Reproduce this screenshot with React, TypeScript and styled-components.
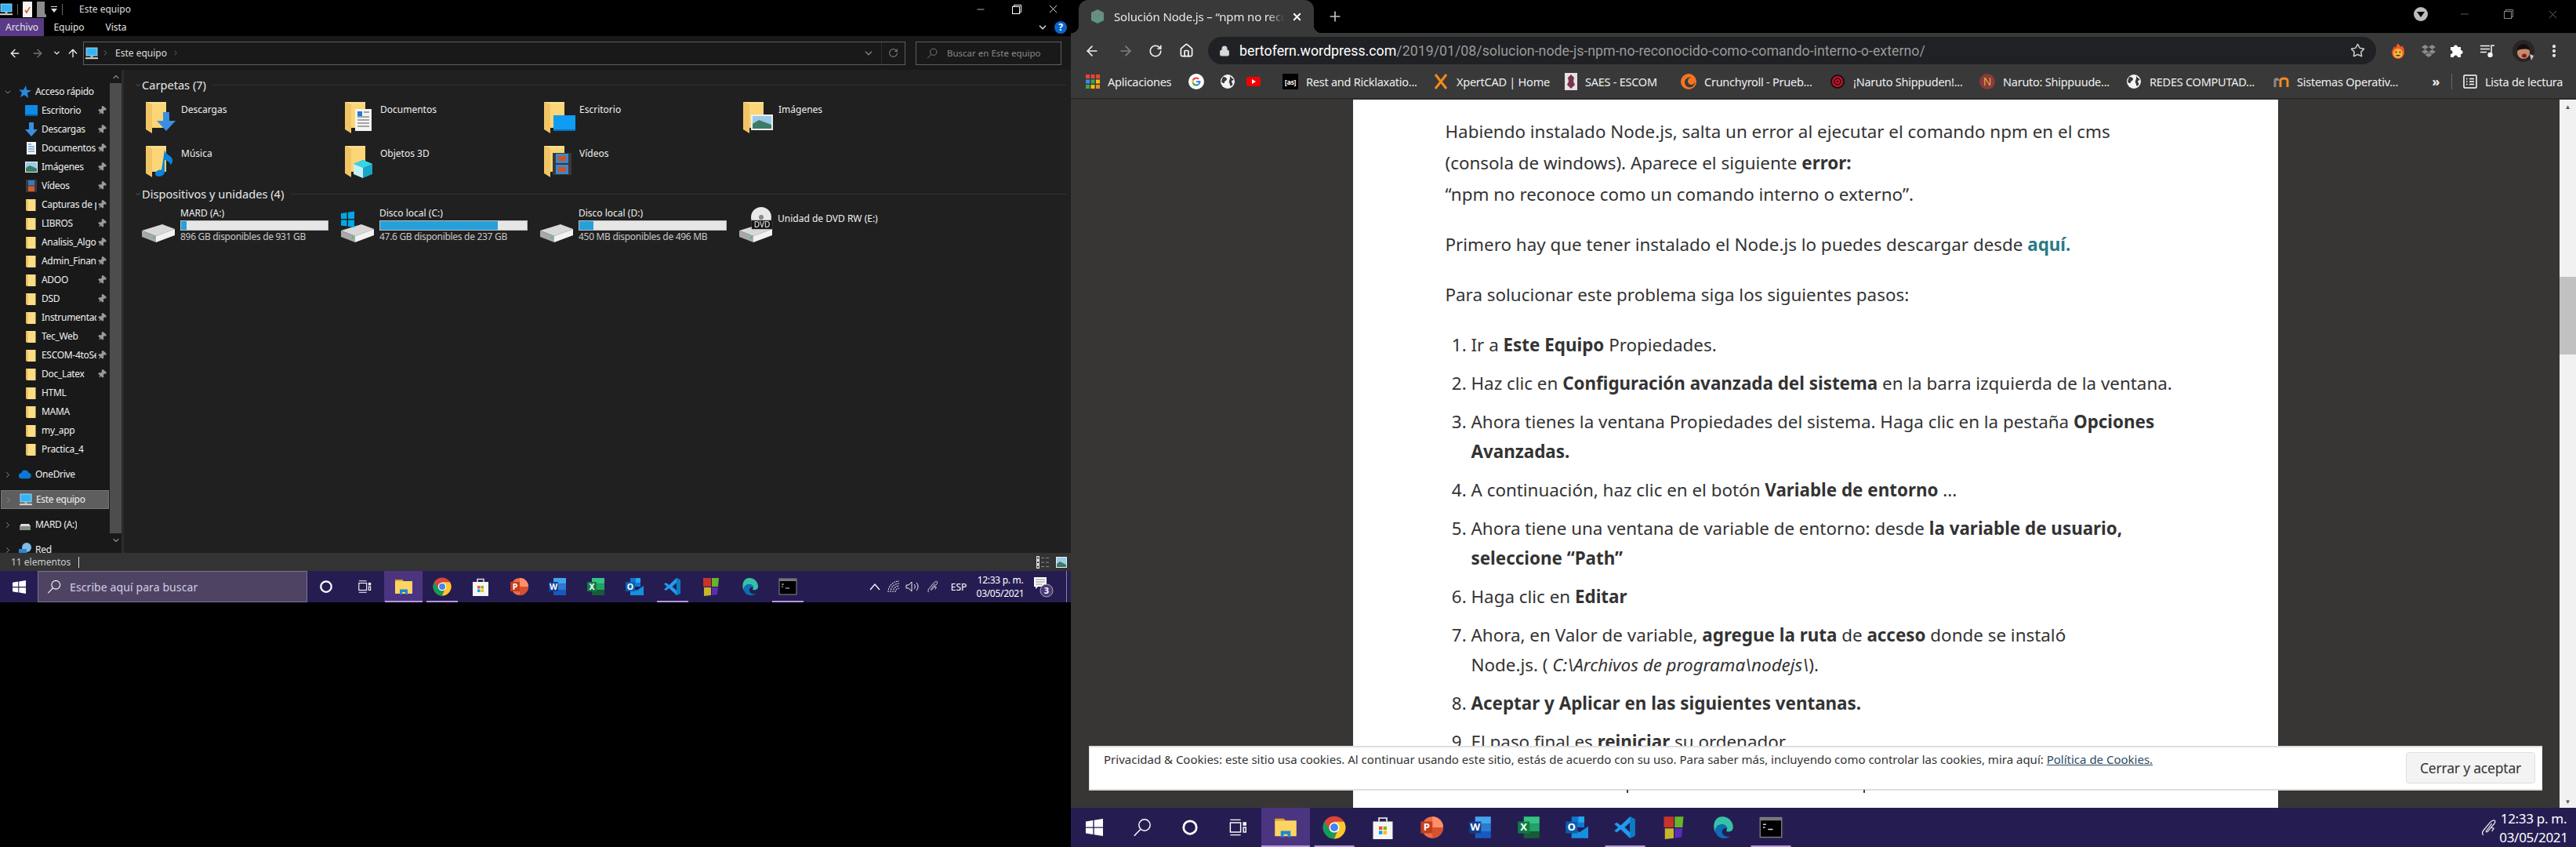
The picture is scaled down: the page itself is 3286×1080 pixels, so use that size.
import React from 'react';
import styled, { createGlobalStyle } from 'styled-components';
import { Pin, ArrowLeft, ArrowRight, ArrowUp, ChevronDown, ChevronRight, ChevronUp, RotateCw, Star, Home, Lock, Plus, X, Minus, MoreVertical } from 'lucide-react';

const Global = createGlobalStyle`
  html, body { margin: 0; padding: 0; background: #000; }
  * { box-sizing: border-box; }
`;

const Screen = styled.div`
  width: 3286px; height: 1080px; display: flex; background: #000; overflow: hidden;
  font-family: "Noto Sans", "Open Sans", sans-serif;
`;
const LeftPane = styled.div`
  width: 1366px; height: 768px; flex: none; display: flex; flex-direction: column; color: #fff; font-size: 12px;
`;
const RightPane = styled.div`
  width: 1920px; height: 1080px; flex: none; display: flex; flex-direction: column;
`;

/* ---------- explorer ---------- */
const TitleBar = styled.div`height: 23px; display: flex; align-items: center; background: #000;`;
const QuickIcons = styled.div`display: flex; align-items: center; width: 101px; gap: 6px;`;
const VSep = styled.span`width: 1px; height: 14px; background: #666; flex: none;`;
const TitleText = styled.span`flex: 1; font-size: 12px; color: #ddd; line-height: 1;`;
const WinBtn = styled.span<{ $w: number }>`width: ${p => p.$w}px; display: flex; justify-content: center; align-items: center; color: #fff; flex: none;`;
const RibbonTabs = styled.div`height: 23px; display: flex; align-items: stretch; background: #000;`;
const RibbonTab = styled.span<{ $active?: boolean; $w: number }>`
  width: ${p => p.$w}px; display: flex; align-items: center; justify-content: center; color: #e4e4e4;
  background: ${p => (p.$active ? '#5a3a87' : 'transparent')};
`;
const RibbonEnd = styled.div`margin-left: auto; display: flex; align-items: center; gap: 8px; padding-right: 5px;`;
const HelpDot = styled.span`
  width: 16px; height: 16px; border-radius: 50%; background: #0a66c8; color: #fff; font-weight: 700; font-size: 12px;
  display: flex; align-items: center; justify-content: center;
`;
const NavBar = styled.div`height: 43px; background: #191919; display: flex; align-items: center; padding-left: 7px;`;
const NavSlot = styled.span<{ $w: number; $dim?: boolean }>`
  width: ${p => p.$w}px; flex: none; display: flex; justify-content: center; align-items: center;
  color: ${p => (p.$dim ? '#777' : '#f0f0f0')};
`;
const AddressBox = styled.div`
  width: 1049px; height: 30px; border: 1px solid #5e5e5e; display: flex; align-items: center; padding-left: 2px; flex: none; margin-left: -1px;
`;
const AddressText = styled.span`font-size: 12px; color: #ddd; margin: 0 6px 0 4px;`;
const AddressEnd = styled.div`margin-left: auto; display: flex; align-items: center; height: 100%;`;
const AddressSep = styled.span`width: 1px; height: 100%; background: #2e2e2e;`;
const SearchBox = styled.div`
  width: 186px; height: 30px; margin-left: 13px; border: 1px solid #5e5e5e; display: flex; align-items: center; padding-left: 13px; gap: 12px; color: #888; font-size: 11.5px;
`;
const Body = styled.div`height: 616px; display: flex; background: #191919; overflow: hidden;`;
const Tree = styled.div`width: 140px; padding-top: 16px; flex: none; overflow: hidden;`;
const TreeRow = styled.div<{ $gap?: number; $selected?: boolean }>`
  height: 24px; display: flex; align-items: center; padding-left: 4px; margin-right: 1px; margin-left: ${p => (p.$selected ? 1 : 0)}px;
  margin-top: ${p => p.$gap ?? 0}px; color: #f0f0f0; white-space: nowrap;
  background: ${p => (p.$selected ? '#5e5e5e' : 'transparent')};
  outline: ${p => (p.$selected ? '1px solid #777' : 'none')}; outline-offset: -1px;
`;
const Twisty = styled.span`width: 12px; flex: none; display: flex; justify-content: center; color: #8a8a8a;`;
const TreeIcon = styled.span<{ $level: number }>`
  flex: none; width: 16px; height: 16px; display: flex; align-items: center; justify-content: center;
  margin-left: ${p => (p.$level === 1 ? 8 : 28)}px; margin-right: 5px;
`;
const TreeName = styled.span<{ $clip?: boolean }>`
  overflow: hidden; display: block; width: ${p => (p.$clip ? '70px' : 'auto')}; flex: none; font-size: 12px; line-height: 1.2; letter-spacing: -0.3px;
`;
const PinBox = styled.span`
  flex: none; width: 14px; display: flex; justify-content: center; color: #9a9a9a;
  svg { transform: rotate(40deg); }
`;
const Scroll = styled.div`width: 15px; flex: none; display: flex; flex-direction: column; align-items: stretch; color: #888;`;
const ScrollArrow = styled.span`height: 17px; display: flex; align-items: center; justify-content: center; flex: none;`;
const ScrollThumb = styled.span`flex: none; height: 574px; background: #4d4d4d;`;
const ScrollGap = styled.div`width: 3px; background: #2c2c2c; flex: none;`;
const Content = styled.div`flex: 1; background: #202020; padding: 9px 6px 0 13px; position: relative;`;
const GroupHead = styled.div`height: 20px; display: flex; align-items: center; color: #e8e8e8; font-size: 14.6px; white-space: nowrap;`;
const GroupChevron = styled.span`width: 10px; display: flex; justify-content: center; color: #666; flex: none;`;
const GroupRule = styled.span`flex: 1; height: 1px; background: #333; margin-left: 8px;`;
const FolderGrid = styled.div`
  display: grid; grid-template-columns: repeat(4, 254px); grid-template-rows: 56px 51px; margin: 12px 0 0 10px;
`;
const FolderCell = styled.div`display: flex; align-items: flex-start; padding-left: 5px;`;
const FolderThumb = styled.span`width: 45px; flex: none; display: block; height: 42px;`;
const FolderName = styled.span`font-size: 12px; margin-top: 2px; color: #f0f0f0; line-height: 16px;`;
const DriveGrid = styled.div`
  display: grid; grid-template-columns: repeat(4, 254px); margin: 7px 0 0 10px;
`;
const DriveCell = styled.div`display: flex; align-items: flex-start; height: 48px;`;
const DriveThumb = styled.span`width: 49px; flex: none; display: block; height: 46px;`;
const DriveInfo = styled.div`width: 189px; display: flex; flex-direction: column;`;
const DriveName = styled.span<{ $alone?: boolean }>`line-height: 16px; height: 16px; color: #f0f0f0; margin-top: ${p => (p.$alone ? 7 : 0)}px; white-space: nowrap;`;
const DriveBar = styled.span`height: 13px; margin-top: 1px; background: #e6e6e6; border: 1px solid #bcbcbc; display: block;`;
const DriveFill = styled.span`height: 100%; display: block; background: #26a0da;`;
const DriveSub = styled.span`line-height: 16px; color: #c8c8c8; white-space: nowrap; letter-spacing: -0.3px;`;
const StatusBar = styled.div`height: 23px; background: #333; display: flex; align-items: center; padding-left: 14px; color: #ccc; font-size: 12px;`;
const StatusTick = styled.span`width: 1px; height: 14px; background: #ddd; margin-left: 10px;`;
const StatusEnd = styled.div`margin-left: auto; display: flex; gap: 7px; align-items: center; padding-right: 5px;`;

/* ---------- taskbar ---------- */
const Taskbar = styled.div<{ $h: number }>`
  height: ${p => p.$h}px; background: #251d52; display: flex; align-items: stretch; color: #fff; flex: none;
`;
const TaskSlot = styled.span<{ $w: number; $tile?: boolean; $open?: number }>`
  width: ${p => p.$w}px; flex: none; display: flex; align-items: center; justify-content: center; position: relative;
  background: ${p => (p.$tile ? '#4c3580' : 'transparent')};
  &::after {
    content: ''; position: absolute; bottom: 0; height: 2px; background: #b795e2;
    width: ${p => p.$open ?? 0}px; left: 50%; transform: translateX(-50%);
  }
`;
const TaskSearch = styled.div`
  width: 344px; flex: none; background: #4f4364; border: 1px solid #7c7194; display: flex; align-items: center; padding-left: 11px; gap: 11px;
  color: #d4cfe0; font-size: 14px; letter-spacing: 0.1px;
`;
const Tray = styled.div<{ $pr?: number }>`display: flex; align-items: stretch; margin-left: auto; padding-right: ${p => p.$pr ?? 0}px;`;
const TrayItem = styled.span<{ $w: number }>`width: ${p => p.$w}px; flex: none; display: flex; align-items: center; justify-content: center; font-size: 12px;`;
const Clock = styled.span<{ $w: number; $fs: number; $gap: number }>`
  width: ${p => p.$w}px; flex: none; display: flex; flex-direction: column; align-items: center; justify-content: center; gap: ${p => p.$gap}px;
  font-size: ${p => p.$fs}px; line-height: 1; white-space: nowrap; letter-spacing: -0.3px;
`;
const DesktopLine = styled.span`width: 1px; background: #8a83a8; margin: 0 5px 0 6px; flex: none;`;
const Notify = styled.span`display: flex;`;

/* ---------- chrome ---------- */
const TabRow = styled.div`height: 42px; background: #000; display: flex; align-items: stretch; flex: none;`;
const Tab = styled.div`
  width: 300px; margin-left: 10px; background: #393939; border-radius: 12px 12px 0 0; display: flex; align-items: center; padding-left: 15px; position: relative; flex: none;
  &::before, &::after { content: ''; position: absolute; bottom: 0; width: 10px; height: 10px; }
  &::before { left: -10px; background: radial-gradient(circle at 0 0, transparent 10px, #393939 10.5px); }
  &::after { right: -10px; background: radial-gradient(circle at 100% 0, transparent 10px, #393939 10.5px); }
`;
const TabTitle = styled.span`
  width: 218px; margin-left: 12px; overflow: hidden; white-space: nowrap; color: #e8e8e8; font-size: 15px; letter-spacing: -0.15px;
  -webkit-mask-image: linear-gradient(to right, #000 90%, transparent); mask-image: linear-gradient(to right, #000 90%, transparent);
`;
const TabClose = styled.span`margin-left: 8px; display: flex; color: #fff;`;
const TabPlus = styled.span`width: 34px; margin-left: 10px; display: flex; align-items: center; justify-content: center; color: #c4c4c4;`;
const ChromeControls = styled.div`margin-left: auto; display: flex; align-items: center; padding: 0 2px 6px 0; color: #888;`;
const ProfileDown = styled.span`
  width: 18px; height: 18px; border-radius: 50%; background: #bdbdbd; margin-right: 19px; display: flex; align-items: center; justify-content: center;
`;
const Toolbar = styled.div`height: 40px; background: #393939; padding: 5px 0 0 6px; display: flex; align-items: stretch; flex: none;`;
const ToolSlot = styled.span<{ $w: number; $dim?: boolean }>`
  width: ${p => p.$w}px; flex: none; display: flex; align-items: center; justify-content: center; color: ${p => (p.$dim ? '#808080' : '#f0f0f0')};
`;
const Omnibox = styled.div`
  width: 1490px; margin-left: 5px; margin-right: 9px; background: #202124; border-radius: 18px; display: flex; align-items: center; padding-left: 14px; flex: none; color: #d8d8d8;
`;
const UrlHost = styled.span`color: #fff; font-family: Roboto, sans-serif; font-size: 17.8px; margin-left: 12px;`;
const UrlPath = styled.span`color: #9a9a9a; font-family: Roboto, sans-serif; font-size: 17.8px; flex: 1;`;
const Bookmarks = styled.div`
  height: 45px; background: #393939; display: flex; align-items: center; padding-left: 19px; color: #f0f0f0; font-size: 14.5px; flex: none; border-bottom: 2px solid #2b2b2b;
`;
const Bookmark = styled.span<{ $w: number }>`width: ${p => p.$w}px; flex: none; display: flex; align-items: center; gap: 10px; white-space: nowrap; letter-spacing: -0.25px;`;
const BookmarkSep = styled.span`width: 1px; height: 20px; background: #666; margin: 0 14px 0 10px;`;
const OverflowMark = styled.span`font-size: 16px; width: 19px; text-align: center; font-weight: 700;`;
const Page = styled.div`flex: 1; display: flex; background: #373634; position: relative; overflow: hidden; min-height: 0;`;
const Canvas = styled.div`flex: 1; display: flex; justify-content: center; overflow: hidden;`;
const Article = styled.article`
  width: 1180px; background: #fff; padding: 21px 118px 0; color: #333; font-size: 22.4px;
`;
const Para = styled.p`margin: 0 0 24px; line-height: 40px;`;
const TealLink = styled.strong`color: #2a7a86;`;
const Steps = styled.ol`margin: 25px 0 0; padding: 0 0 0 33px;`;
const Step = styled.li`line-height: 38.4px; margin-bottom: 10.4px;`;
const Banner = styled.div`
  position: absolute; left: 23px; top: 824px; width: 1854px; height: 57px; background: #fff; border: 1px solid #dedede; border-width: 2px 0 2px 1px;
  display: flex; justify-content: space-between; padding: 5px 9px 0 18px; color: #333; font-size: 15px;
`;
const BannerText = styled.span`line-height: 20px;`;
const BannerLink = styled.a`color: #2b4a63; text-decoration: underline;`;
const BannerButton = styled.button`
  width: 165px; height: 40px; background: #f3f3f3; border: 1px solid #dedede; border-radius: 4px; color: #333; font: 17.5px "Noto Sans", sans-serif; letter-spacing: -0.2px; margin-top: 1px;
`;
const Tick = styled.span<{ $x: number }>`position: absolute; top: 880px; left: ${p => p.$x}px; width: 2px; height: 4px; background: #444;`;
const PageScroll = styled.div`width: 21px; flex: none; background: #f1f1f1; display: flex; flex-direction: column; align-items: stretch;`;
const PageArrow = styled.span`height: 17px; display: flex; align-items: center; justify-content: center; flex: none; color: #555; font-size: 8px;`;
const PageThumb = styled.span`height: 99px; background: #c1c1c1; margin-top: 209px; flex: none;`;
const PageArrowEnd = styled(PageArrow)`margin-top: auto;`;

/* ---------- drawn icons ---------- */
const Pc = ({ s = 16 }: { s?: number }) => (
  <svg width={s} height={s} viewBox="0 0 16 16"><rect x="1" y="1" width="14" height="10" fill="#35b4f4" stroke="#bfe6fb" strokeWidth=".8"/><rect x="6.5" y="11" width="3" height="2" fill="#bbb"/><rect x="0" y="13.2" width="16" height="2" fill="#d8d8d8"/></svg>
);
const FolderSm = () => (
  <svg width="14" height="16" viewBox="0 0 14 16"><path d="M0 1h12.5v15H2.5L0 15z" fill="#fcdd85"/><path d="M0 1l2.5 1V16L0 15z" fill="#e8bd5a"/></svg>
);
const FolderBig: React.FC<{ children?: React.ReactNode }> = ({ children }) => (
  <svg width="45" height="42" viewBox="0 0 45 42">
    <path d="M0 0h26v33H8z" fill="#fbdc8d"/>
    <path d="M0 0l8 3v37l-8-5z" fill="#f1c465"/>
    <path d="M8 3h18v30H8z" fill="#fcd676"/>
    {children}
  </svg>
);
const DriveShape = () => (
  <g transform="translate(0 22)">
    <path d="M0 8L26 0l16 6-24 9z" fill="#d8d8d8"/>
    <path d="M0 8l18 7v8L0 16z" fill="#a8a8a8"/>
    <path d="M18 15l24-9v8l-24 9z" fill="#f2f2f2"/>
    <circle cx="15" cy="17" r="1.2" fill="#36c956"/>
  </g>
);
const Drive: React.FC<{ win?: boolean }> = ({ win }) => (
  <svg width="44" height="46" viewBox="0 0 44 46">
    <DriveShape/>
    {win && <path d="M0 8l7.5-1v8H0zM9 6.7L17 5.5V15H9zM0 16.5h7.5v8L0 23.5zM9 16.5h8V26l-8-1.200z" fill="#00a8e8"/>}
  </svg>
);
const Dvd = () => (
  <svg width="44" height="46" viewBox="0 0 44 46">
    <DriveShape/>
    <circle cx="28" cy="13" r="13" fill="#e8e8e8"/>
    <circle cx="28" cy="13" r="3" fill="#888"/>
    <rect x="16" y="17" width="26" height="11" fill="#111" stroke="#555" strokeWidth=".5"/>
    <text x="29" y="26" fontSize="10" fill="#eee" textAnchor="middle" fontFamily="Noto Sans">DVD</text>
  </svg>
);
const SmallDrive = () => (
  <svg width="16" height="16" viewBox="0 0 16 16"><path d="M3 7h10l2 3H1z" fill="#ddd"/><rect x="1" y="10" width="14" height="5" fill="#888"/><rect x="11" y="12" width="2" height="1.5" fill="#3c5"/></svg>
);
const Win: React.FC<{ s: number }> = ({ s }) => (
  <svg width={s} height={s} viewBox="0 0 16 16" fill="#fff"><path d="M0 2.5L6.8 1.5V7.6H0zM7.8 1.3L16 0V7.6H7.8zM0 8.6H6.8V14.500L0 13.5zM7.8 8.6H16V16L7.8 14.700z"/></svg>
);
const Loupe: React.FC<{ s: number; c?: string }> = ({ s, c = '#fff' }) => (
  <svg width={s} height={s} viewBox="0 0 20 20" fill="none" stroke={c} strokeWidth="1.2"><circle cx="12.5" cy="7.5" r="6"/><path d="M8.2 12L1.5 19"/></svg>
);
const Ring: React.FC<{ s: number }> = ({ s }) => (
  <svg width={s} height={s} viewBox="0 0 20 20" fill="none" stroke="#fff" strokeWidth="2.5"><circle cx="10" cy="10" r="7.5"/></svg>
);
const TaskView: React.FC<{ s: number }> = ({ s }) => (
  <svg width={s} height={s} viewBox="0 0 20 20" fill="none" stroke="#fff" strokeWidth="1.2"><path d="M2 2h11M2 18h11"/><rect x="2" y="5" width="11" height="10"/><rect x="16" y="5" width="2.5" height="2.5" fill="#fff"/><rect x="16" y="10" width="2.5" height="5"/></svg>
);
const ExplorerApp: React.FC<{ s: number }> = ({ s }) => (
  <svg width={s} height={s} viewBox="0 0 24 24"><path d="M1 3h9l2 2H1z" fill="#e6a619"/><rect x="1" y="5" width="22" height="16" fill="#fcd462"/><path d="M7 22v-6.5h10V22h-3v-3h-4v3z" fill="#1f88d0"/></svg>
);
const ChromeApp: React.FC<{ s: number }> = ({ s }) => (
  <svg width={s} height={s} viewBox="0 0 48 48"><circle cx="24" cy="24" r="23" fill="#db4437"/><path d="M24 47A23 23 0 0 1 4 12.5L15 30 28 33z" fill="#0f9d58"/><path d="M24 47A23 23 0 0 0 44 12.5H24l8 16z" fill="#fdc82c"/><circle cx="24" cy="24" r="10.5" fill="#fff"/><circle cx="24" cy="24" r="8" fill="#4285f4"/></svg>
);
const StoreApp: React.FC<{ s: number }> = ({ s }) => (
  <svg width={s} height={s} viewBox="0 0 24 24"><path d="M8 6V2.5h8V6" fill="none" stroke="#ddd" strokeWidth="1.5"/><rect x="2" y="6" width="20" height="18" fill="#f5f5f5"/><rect x="8" y="11" width="3.5" height="3.5" fill="#f25022"/><rect x="12.5" y="11" width="3.5" height="3.5" fill="#7fba00"/><rect x="8" y="15.5" width="3.5" height="3.5" fill="#00a4ef"/><rect x="12.5" y="15.5" width="3.5" height="3.5" fill="#ffb900"/></svg>
);
const Office: React.FC<{ s: number; a: string; b: string; c: string; d: string; l: string }> = ({ s, a, b, c, d, l }) => (
  <svg width={s} height={s} viewBox="0 0 24 24"><rect x="7" y="1" width="16" height="7.5" fill={a}/><rect x="7" y="8.5" width="16" height="7.5" fill={b}/><rect x="7" y="16" width="16" height="7" fill={c}/><rect x="1" y="6" width="12" height="12" fill={d}/><text x="7" y="15.5" fontSize="10.5" fontWeight="700" fill="#fff" textAnchor="middle" fontFamily="Noto Sans">{l}</text></svg>
);
const PptApp: React.FC<{ s: number }> = ({ s }) => (
  <svg width={s} height={s} viewBox="0 0 24 24"><circle cx="13" cy="12" r="11" fill="#ed6c47"/><path d="M13 1a11 11 0 0 1 11 11H13z" fill="#ff8f6b"/><path d="M13 12h11a11 11 0 0 1-11 11z" fill="#d35230"/><rect x="1" y="6" width="12" height="12" fill="#c43e1c"/><text x="7" y="15.5" fontSize="10.5" fontWeight="700" fill="#fff" textAnchor="middle" fontFamily="Noto Sans">P</text></svg>
);
const OutlookApp: React.FC<{ s: number }> = ({ s }) => (
  <svg width={s} height={s} viewBox="0 0 24 24"><rect x="7" y="1" width="13" height="11" fill="#0f78d4"/><rect x="14" y="1" width="6" height="6" fill="#28a8ea"/><path d="M7 12l8 5 9-6v12H7z" fill="#1490df"/><rect x="1" y="6" width="12" height="12" fill="#0a5eb0"/><text x="7" y="15.5" fontSize="10.5" fontWeight="700" fill="#fff" textAnchor="middle" fontFamily="Noto Sans">O</text></svg>
);
const VsApp: React.FC<{ s: number }> = ({ s }) => (
  <svg width={s} height={s} viewBox="0 0 24 24"><path d="M17 1l5 2.5v17L17 23 7.5 14 3.5 17 1 15.5 5 12 1 8.5 3.5 7l4 3zM17 7l-5.5 5 5.5 5z" fill="#1f9cf0" fillRule="evenodd"/><path d="M17 1l5 2.5v17L17 23z" fill="#0a7cc4"/></svg>
);
const BlocksApp: React.FC<{ s: number }> = ({ s }) => (
  <svg width={s} height={s} viewBox="0 0 24 24"><path d="M2 1h10v11H2z" fill="#c8332b"/><path d="M13 1h9l-1 11h-8z" fill="#67b52a"/><path d="M3 13h9v10l-9 1z" fill="#c5b62c"/><path d="M13 13h8l-1 9-7 1z" fill="#5b2bb8"/></svg>
);
const EdgeApp: React.FC<{ s: number }> = ({ s }) => (
  <svg width={s} height={s} viewBox="0 0 24 24"><path d="M12 1a11 11 0 0 1 11 11c0 4-4 5-7 4 2-3 0-7-4-7-5 0-8 4-7 8-3-5-2-16 7-16z" fill="#35c1a8"/><path d="M5 17c-1-4 2-8 7-8 3 0 5 2 5 4-3-1-6 1-5 5 1 3 5 4 8 3-3 3-12 4-15-4z" fill="#0c6fb4"/></svg>
);
const TermApp: React.FC<{ s: number }> = ({ s }) => (
  <svg width={s} height={s} viewBox="0 0 24 24"><rect x="1" y="2" width="22" height="20" fill="#000" stroke="#888"/><rect x="1" y="2" width="22" height="3" fill="#777"/><path d="M4 9h3M4 12h2M9 14h5" stroke="#ddd" strokeWidth="1.2"/></svg>
);
const Caret = () => <svg width="14" height="10" viewBox="0 0 14 10" fill="none" stroke="#fff" strokeWidth="1.3"><path d="M1 9l6-7 6 7"/></svg>;
const Wifi = () => <svg width="16" height="16" viewBox="0 0 16 16" fill="none" stroke="#ddd" strokeWidth="1.1"><path d="M1 15A14 14 0 0 1 15 1M4 15A11 11 0 0 1 15 4M7 15a8 8 0 0 1 8-8M10 15a5 5 0 0 1 5-5" strokeDasharray="2 1"/></svg>;
const Volume = () => <svg width="18" height="16" viewBox="0 0 18 16" fill="none" stroke="#eee"><path d="M1 6h3l4-4v12l-4-4H1zM11 5a4 4 0 0 1 0 6M14 3a7 7 0 0 1 0 10"/></svg>;
const PenIcon: React.FC<{ s: number }> = ({ s }) => (
  <svg width={s} height={s} viewBox="0 0 18 18" fill="none" stroke="#eee" strokeWidth="1"><path d="M3 17c-2-2 0-5 2-7l5-6c2-2 4-3 5-2s0 3-2 5l-5 6c-1 1-2 1-2 0l6-8"/><path d="M11 9l3 1-2 3"/></svg>
);
const NoteBadge = () => (
  <svg width="28" height="28" viewBox="0 0 28 28"><path d="M1 2h16v12H6l-3 3v-3H1z" fill="#fff"/><path d="M3 5h12M3 8h12M3 11h8" stroke="#888"/><circle cx="17" cy="19" r="8" fill="#4a3a7a" stroke="#aaa" strokeWidth="1"/><text x="17" y="23" fontSize="11" fontWeight="700" textAnchor="middle" fill="#fff" fontFamily="Noto Sans">3</text></svg>
);
const Square = ({ c, t, s = 18, tc = '#fff' }: { c: string; t?: string; s?: number; tc?: string }) => (
  <svg width={s} height={s} viewBox="0 0 18 18"><rect width="18" height="18" fill={c}/>{t && <text x="9" y="12.5" fontSize="8" fontWeight="700" fill={tc} textAnchor="middle" fontFamily="Noto Sans">{t}</text>}</svg>
);
const Globe = () => (
  <svg width="20" height="20" viewBox="0 0 20 20"><circle cx="10" cy="10" r="9" fill="#f2f2f2"/><path d="M4 4c3 0 5 1 5 3s-3 2-3 4-3 1-4-1M13 3c1 2 4 3 5 5-2 0-3 1-3 2s2 2 1 4-3 2-3 0-2-3-1-5 1-3 1-6z" fill="#393939"/></svg>
);
const Apps = () => (
  <svg width="18" height="18" viewBox="0 0 18 18">
    {[['#ea4335', '#ea4335', '#ea4335'], ['#4285f4', '#34a853', '#fbbc05'], ['#34a853', '#fbbc05', '#ea8a35']].map((row, r) => row.map((c, i) => <rect key={`${r}${i}`} x={i * 6.5} y={r * 6.5} width="5" height="5" fill={c}/>))}
  </svg>
);
const GoogleG = () => (
  <svg width="20" height="20" viewBox="0 0 20 20"><circle cx="10" cy="10" r="10" fill="#fff"/><path d="M10 4.5a5.5 5.5 0 0 1 3.7 1.4l-1.5 1.5A3.5 3.5 0 0 0 6.7 9L4.9 7.6A5.5 5.5 0 0 1 10 4.5z" fill="#ea4335"/><path d="M4.9 7.6L6.7 9a3.5 3.5 0 0 0 0 2.100l-1.800 1.400a5.5 5.5 0 0 1 0-4.900z" fill="#fbbc05"/><path d="M4.9 12.4l1.8-1.400a3.5 3.5 0 0 0 5.300 1.800l1.700 1.300A5.5 5.5 0 0 1 4.9 12.4z" fill="#34a853"/><path d="M15.5 9h-5.500v2h3.100a3 3 0 0 1-1.100 1.800l1.700 1.300A5.5 5.5 0 0 0 15.5 9z" fill="#4285f4"/></svg>
);
const Yt = () => (
  <svg width="18" height="18" viewBox="0 0 18 18"><rect y="3" width="18" height="12" rx="3" fill="#f40000"/><path d="M7 6l5 3-5 3z" fill="#fff"/></svg>
);
const XMark = () => (
  <svg width="20" height="20" viewBox="0 0 20 20" fill="none" stroke="#f28a1c" strokeWidth="3"><path d="M3 1l14 18M17 1L3 19"/></svg>
);
const Saes = () => (
  <svg width="16" height="22" viewBox="0 0 16 22"><rect width="16" height="22" fill="#e8e0e4"/><path d="M8 2l4 4-1 5 2 4-5 5-5-5 2-4-1-5z" fill="#7a3350"/></svg>
);
const Crunchy = () => (
  <svg width="20" height="22" viewBox="0 0 20 20"><circle cx="10" cy="10" r="10" fill="#f47521"/><circle cx="11.5" cy="11" r="6.5" fill="#393939"/><circle cx="13.5" cy="9.5" r="4.5" fill="#f47521"/></svg>
);
const Swirl = () => (
  <svg width="20" height="20" viewBox="0 0 20 20"><circle cx="10" cy="10" r="9" fill="#111"/><circle cx="10" cy="10" r="7" fill="#d01028"/><circle cx="10" cy="10" r="4" fill="none" stroke="#111" strokeWidth="1.5"/><circle cx="10" cy="10" r="1.3" fill="#111"/></svg>
);
const NBadge = () => (
  <svg width="20" height="20" viewBox="0 0 20 20"><circle cx="10" cy="10" r="10" fill="#8a3a3a"/><text x="10" y="15" fontSize="14" fill="#e2b23c" textAnchor="middle" fontFamily="Noto Sans">N</text></svg>
);
const Moodle = () => (
  <svg width="20" height="16" viewBox="0 0 20 16" fill="none" strokeWidth="3"><path d="M2 15V7c0-3 4-3 4 0" stroke="#8a8a8a"/><path d="M9 15V7c0-4 9-4 9 0v8" stroke="#f08a24"/></svg>
);
const ListBox = () => (
  <svg width="18" height="18" viewBox="0 0 18 18" fill="none" stroke="#fff" strokeWidth="1.5"><rect x="1" y="1" width="16" height="16" rx="1"/><path d="M4 5.5h1.5M8 5.5h6M4 9h1.5M8 9h6M4 12.5h1.5M8 12.5h6"/></svg>
);
const HolaIcon = () => (
  <svg width="16" height="20" viewBox="0 0 16 20"><path d="M8 0c1 3 3 2 3 5 1-1 2-1 2-2 3 4 3 7 3 9a8 8 0 0 1-16 0c0-3 2-5 3-8 1 1 1 2 2 2 0-2 2-4 3-6z" fill="#ef5a24"/><circle cx="8" cy="13" r="6" fill="#f9b43a"/><circle cx="5.5" cy="11.5" r="1" fill="#333"/><circle cx="10.5" cy="11.5" r="1" fill="#333"/><path d="M5 15a3.5 3.5 0 0 0 6 0" fill="#333"/></svg>
);
const DropboxIcon = () => (
  <svg width="18" height="16" viewBox="0 0 18 16" fill="#8a8a8a"><path d="M4.5 0L9 3 4.5 6 0 3zM13.5 0L18 3l-4.5 3L9 3zM4.5 6L9 9l-4.5 3L0 9zM13.5 6L18 9l-4.5 3L9 9zM4.5 13L9 10l4.5 3L9 16z"/></svg>
);
const Puzzle = () => (
  <svg width="20" height="20" viewBox="0 0 20 20" fill="#fff"><path d="M2 5h4a2.5 2.5 0 1 1 5 0h4v4a2.5 2.5 0 1 1 0 5v4h-4a2.5 2.5 0 1 0-5 0H2v-4a2.5 2.5 0 1 0 0-5z"/></svg>
);
const MusicList = () => (
  <svg width="20" height="16" viewBox="0 0 20 16" fill="none" stroke="#f4f4f4" strokeWidth="1.5"><path d="M0 1.5h12M0 5.5h12M0 9.5h8"/><path d="M14 12V1h4"/><circle cx="12.5" cy="13" r="2.5" fill="#f4f4f4"/></svg>
);
const Avatar = () => (
  <svg width="28" height="28" viewBox="0 0 28 28"><circle cx="14" cy="14" r="14" fill="#2a2422"/><circle cx="14" cy="16" r="8" fill="#c98a6a"/><path d="M6 14c0-6 4-9 8-9s8 3 8 8c-4-2-12-2-16 1z" fill="#111"/><ellipse cx="15" cy="20" rx="3" ry="2.5" fill="#7a1d1d"/><path d="M22 18l5 2-3 6z" fill="#ccc"/></svg>
);
const Favicon = () => (
  <svg width="18" height="20" viewBox="0 0 18 20"><path d="M9 1l8 4v10l-8 4-8-4V5z" fill="#6f8c7e"/><path d="M9 3l5 3v8l-5 3-5-3V6z" fill="none" stroke="#37a78c" strokeWidth="1.5"/><path d="M3 6l6 4 6-4" stroke="#a86a6a" fill="none"/></svg>
);
const QuickDoc = () => (
  <svg width="12" height="20" viewBox="0 0 12 20"><rect width="12" height="20" fill="#f4f4f4"/><path d="M3 11l2 3 4-7" stroke="#e04a1c" strokeWidth="1.5" fill="none"/></svg>
);
const QuickFold = () => (
  <svg width="12" height="20" viewBox="0 0 12 20"><path d="M0 0h10v15l2 2v3H0z" fill="#8c8c8c"/></svg>
);
const QuickDrop = () => (
  <svg width="8" height="10" viewBox="0 0 8 10" fill="#ddd"><rect y="1" width="8" height="1"/><path d="M0 4h8L4 9z"/></svg>
);
const Restore = ({ c }: { c: string }) => (
  <svg width="12" height="12" viewBox="0 0 12 12" fill="none" stroke={c}><rect x=".5" y="2.5" width="9" height="9"/><path d="M2.5 2.5v-2h9v9h-2"/></svg>
);
const ViewList = () => (
  <svg width="18" height="16" viewBox="0 0 18 16"><rect width="4" height="16" fill="#ddd"/><rect x="1" y="1.5" width="2" height="2" fill="#333"/><rect x="1" y="7" width="2" height="2" fill="#333"/><rect x="1" y="12.5" width="2" height="2" fill="#333"/><path d="M6 2.5h4M12 2.5h4M6 8h4M12 8h4M6 13.5h4M12 13.5h4" stroke="#888"/></svg>
);
const ViewPic = () => (
  <svg width="14" height="14" viewBox="0 0 14 14"><rect width="14" height="14" fill="#eee"/><rect x="1" y="1" width="12" height="12" fill="#9bcbe8"/><path d="M1 9l4-3 8 4v3H1z" fill="#3e7a68"/></svg>
);
const ImgSm = () => (
  <svg width="16" height="14" viewBox="0 0 16 14"><rect width="16" height="14" fill="#eee"/><rect x="1" y="1" width="14" height="12" fill="#9bcbe8"/><path d="M1 8l5-3 9 4v4H1z" fill="#3e7a68"/></svg>
);
const DocSm = () => (
  <svg width="12" height="16" viewBox="0 0 12 16"><rect width="12" height="16" fill="#f6f6f6"/><path d="M2 3h4M2 6h8M2 9h8M2 12h8" stroke="#2a7bc8"/></svg>
);
const DlSm = () => (
  <svg width="16" height="18" viewBox="0 0 16 18"><path d="M5 0h6v9h5l-8 9-8-9h5z" fill="#3b8ee0"/></svg>
);
const DeskSm = () => (
  <svg width="16" height="14" viewBox="0 0 16 14"><rect width="16" height="14" fill="#0e8ae8"/><rect y="12" width="16" height="2" fill="#0a5fa8"/></svg>
);
const VidSm = () => (
  <svg width="14" height="16" viewBox="0 0 14 16"><rect width="14" height="16" fill="#3a3a3a"/><rect x="3" y="1" width="8" height="6.5" fill="#3878c0"/><rect x="3" y="8.5" width="8" height="6.5" fill="#d85a28"/></svg>
);
const StarSm = () => (
  <svg width="16" height="16" viewBox="0 0 16 16"><path d="M9 0l1 5.5 6 1-5 3 1 6.5-5-4-5 3 2-6L0 5.5h6z" fill="#2a88dd"/></svg>
);
const Cloud = () => (
  <svg width="18" height="12" viewBox="0 0 18 12"><path d="M4 12a4 4 0 0 1-.5-8A5.500 5.500 0 0 1 14 3.500 4.300 4.300 0 0 1 14 12z" fill="#0a78d4"/></svg>
);
const RedIcon = () => (
  <svg width="16" height="18" viewBox="0 0 16 18"><circle cx="10" cy="6" r="6" fill="#7cbbe8"/><rect x="0" y="8" width="10" height="10" fill="#2d86cf"/></svg>
);

const quick = [
  ['Escritorio', <DeskSm />], ['Descargas', <DlSm />], ['Documentos', <DocSm />], ['Imágenes', <ImgSm />], ['Vídeos', <VidSm />],
  ['Capturas de pantalla', <FolderSm />], ['LIBROS', <FolderSm />], ['Analisis_Algoritmos', <FolderSm />], ['Admin_Finanzas', <FolderSm />], ['ADOO', <FolderSm />], ['DSD', <FolderSm />],
  ['Instrumentación', <FolderSm />], ['Tec_Web', <FolderSm />], ['ESCOM-4toSemestre', <FolderSm />], ['Doc_Latex', <FolderSm />],
] as const;
const recent = ['HTML', 'MAMA', 'my_app', 'Practica_4'];

const Row1 = ({ name, icon, gap, selected, open }: { name: string; icon: React.ReactNode; gap?: number; selected?: boolean; open?: boolean }) => (
  <TreeRow $gap={gap} $selected={selected}>
    <Twisty>{open ? <ChevronDown size={13} /> : <ChevronRight size={13} />}</Twisty>
    <TreeIcon $level={1}>{icon}</TreeIcon>
    <TreeName>{name}</TreeName>
  </TreeRow>
);

const appsRow = (s: number) => [
  <ChromeApp s={s} />, <StoreApp s={s} />, <PptApp s={s} />,
  <Office s={s} l="W" a="#41a5ee" b="#2b7cd3" c="#185abd" d="#103f91" />,
  <Office s={s} l="X" a="#33c481" b="#21a366" c="#185c37" d="#107c41" />,
  <OutlookApp s={s} />, <VsApp s={s} />, <BlocksApp s={s} />, <EdgeApp s={s} />, <TermApp s={s} />,
];
const openIdx = [0, 6, 9];

export default function App() {
  return (
    <Screen>
      <Global />
      <LeftPane>
        <TitleBar>
          <QuickIcons>
            <Pc />
            <VSep />
            <QuickDoc />
            <QuickFold />
            <QuickDrop />
            <VSep />
          </QuickIcons>
          <TitleText>Este equipo</TitleText>
          <WinBtn $w={46}><Minus size={14} strokeWidth={1.2} /></WinBtn>
          <WinBtn $w={46}><Restore c="#fff" /></WinBtn>
          <WinBtn $w={46}><X size={17} strokeWidth={1.2} /></WinBtn>
        </TitleBar>
        <RibbonTabs>
          <RibbonTab $active $w={56}>Archivo</RibbonTab>
          <RibbonTab $w={64}>Equipo</RibbonTab>
          <RibbonTab $w={56}>Vista</RibbonTab>
          <RibbonEnd>
            <ChevronDown size={14} strokeWidth={3} color="#ccc" />
            <HelpDot>?</HelpDot>
          </RibbonEnd>
        </RibbonTabs>
        <NavBar>
          <NavSlot $w={24}><ArrowLeft size={16} /></NavSlot>
          <NavSlot $w={34} $dim><ArrowRight size={16} /></NavSlot>
          <NavSlot $w={14}><ChevronDown size={11} strokeWidth={3} /></NavSlot>
          <NavSlot $w={28}><ArrowUp size={16} /></NavSlot>
          <AddressBox>
            <Pc />
            <NavSlot $w={18} $dim><ChevronRight size={11} /></NavSlot>
            <AddressText>Este equipo</AddressText>
            <NavSlot $w={10} $dim><ChevronRight size={11} /></NavSlot>
            <AddressEnd>
              <NavSlot $w={32} $dim><ChevronDown size={14} strokeWidth={3} /></NavSlot>
              <AddressSep />
              <NavSlot $w={29} $dim><RotateCw size={13} /></NavSlot>
            </AddressEnd>
          </AddressBox>
          <SearchBox>
            <Loupe s={14} c="#888" />
            <span>Buscar en Este equipo</span>
          </SearchBox>
        </NavBar>
        <Body>
          <Tree>
            <Row1 name="Acceso rápido" icon={<StarSm />} open />
            {quick.map(([n, ic]) => (
              <TreeRow key={n}>
                <TreeIcon $level={2}>{ic}</TreeIcon>
                <TreeName $clip>{n}</TreeName>
                <PinBox><Pin size={12} fill="#9a9a9a" /></PinBox>
              </TreeRow>
            ))}
            {recent.map(n => (
              <TreeRow key={n}>
                <TreeIcon $level={2}><FolderSm /></TreeIcon>
                <TreeName $clip>{n}</TreeName>
              </TreeRow>
            ))}
            <Row1 name="OneDrive" icon={<Cloud />} gap={8} />
            <Row1 name="Este equipo" icon={<Pc />} gap={8} selected />
            <Row1 name="MARD (A:)" icon={<SmallDrive />} gap={8} />
            <Row1 name="Red" icon={<RedIcon />} gap={8} />
          </Tree>
          <Scroll>
            <ScrollArrow><ChevronUp size={12} strokeWidth={2.5} /></ScrollArrow>
            <ScrollThumb />
            <ScrollArrow><ChevronDown size={12} strokeWidth={2.5} /></ScrollArrow>
          </Scroll>
          <ScrollGap />
          <Content>
            <GroupHead>
              <GroupChevron><ChevronDown size={13} /></GroupChevron>
              <span>Carpetas (7)</span>
              <GroupRule />
            </GroupHead>
            <FolderGrid>
              <FolderCell>
                <FolderThumb><FolderBig><path d="M22 13h8v11h8L26 37 14 24h8z" fill="#3b8ee0" /></FolderBig></FolderThumb>
                <FolderName>Descargas</FolderName>
              </FolderCell>
              <FolderCell>
                <FolderThumb><FolderBig><rect x="13" y="9" width="21" height="28" fill="#f4f4f4" /><path d="M24 13h7M16 19h15M16 23h15M16 27h15M16 31h15" stroke="#555" /><rect x="16" y="12" width="6" height="6" fill="#2a7bc8" /></FolderBig></FolderThumb>
                <FolderName>Documentos</FolderName>
              </FolderCell>
              <FolderCell>
                <FolderThumb><FolderBig><rect x="12" y="17" width="28" height="20" fill="#0e9cf5" /><rect x="12" y="35" width="28" height="2" fill="#0a70b8" /></FolderBig></FolderThumb>
                <FolderName>Escritorio</FolderName>
              </FolderCell>
              <FolderCell>
                <FolderThumb><FolderBig><rect x="10" y="16" width="28" height="20" fill="#eee" /><rect x="12" y="18" width="24" height="16" fill="#9bcbe8" /><path d="M12 28l8-5 16 6v5H12z" fill="#3e7a68" /></FolderBig></FolderThumb>
                <FolderName>Imágenes</FolderName>
              </FolderCell>
              <FolderCell>
                <FolderThumb><FolderBig><path d="M24 5c1 6 8 7 10 12 1 4-2 6-2 8-1-4-4-6-8-7v15c0 4-4 6-8 6s-5-4-3-6 5-3 7-2z" fill="#0b84dc" /></FolderBig></FolderThumb>
                <FolderName>Música</FolderName>
              </FolderCell>
              <FolderCell>
                <FolderThumb><FolderBig><path d="M23 18l12 5v13l-12 5-12-5V23z" fill="#1aa6c4" /><path d="M23 18l12 5-12 5-12-5z" fill="#39d3e8" /><path d="M11 23l12 5v13l-12-5z" fill="#c7f1f5" /></FolderBig></FolderThumb>
                <FolderName>Objetos 3D</FolderName>
              </FolderCell>
              <FolderCell>
                <FolderThumb><FolderBig><rect x="11" y="9" width="24" height="28" fill="#3a3a3a" /><rect x="15" y="10" width="16" height="12" fill="#3f86d0" /><rect x="15" y="24" width="16" height="12" fill="#3f86d0" /><path d="M18 13h10v6H18zM18 27h10v6H18z" fill="#c9562a" /></FolderBig></FolderThumb>
                <FolderName>Vídeos</FolderName>
              </FolderCell>
            </FolderGrid>
            <GroupHead>
              <GroupChevron><ChevronDown size={13} /></GroupChevron>
              <span>Dispositivos y unidades (4)</span>
              <GroupRule />
            </GroupHead>
            <DriveGrid>
              <DriveCell>
                <DriveThumb><Drive /></DriveThumb>
                <DriveInfo>
                  <DriveName>MARD (A:)</DriveName>
                  <DriveBar><DriveFill style={{ width: '4%' }} /></DriveBar>
                  <DriveSub>896 GB disponibles de 931 GB</DriveSub>
                </DriveInfo>
              </DriveCell>
              <DriveCell>
                <DriveThumb><Drive win /></DriveThumb>
                <DriveInfo>
                  <DriveName>Disco local (C:)</DriveName>
                  <DriveBar><DriveFill style={{ width: '80%' }} /></DriveBar>
                  <DriveSub>47.6 GB disponibles de 237 GB</DriveSub>
                </DriveInfo>
              </DriveCell>
              <DriveCell>
                <DriveThumb><Drive /></DriveThumb>
                <DriveInfo>
                  <DriveName>Disco local (D:)</DriveName>
                  <DriveBar><DriveFill style={{ width: '9.5%' }} /></DriveBar>
                  <DriveSub>450 MB disponibles de 496 MB</DriveSub>
                </DriveInfo>
              </DriveCell>
              <DriveCell>
                <DriveThumb><Dvd /></DriveThumb>
                <DriveInfo>
                  <DriveName $alone>Unidad de DVD RW (E:)</DriveName>
                </DriveInfo>
              </DriveCell>
            </DriveGrid>
          </Content>
        </Body>
        <StatusBar>
          <span>11 elementos</span>
          <StatusTick />
          <StatusEnd><ViewList /><ViewPic /></StatusEnd>
        </StatusBar>
        <Taskbar $h={40}>
          <TaskSlot $w={48}><Win s={17} /></TaskSlot>
          <TaskSearch><Loupe s={18} /><span>Escribe aquí para buscar</span></TaskSearch>
          <TaskSlot $w={47}><Ring s={18} /></TaskSlot>
          <TaskSlot $w={51}><TaskView s={18} /></TaskSlot>
          <TaskSlot $w={49} $tile $open={48}><ExplorerApp s={24} /></TaskSlot>
          {appsRow(24).map((a, i) => <TaskSlot key={i} $w={49} $open={openIdx.includes(i) ? 40 : 0}>{a}</TaskSlot>)}
          <Tray>
            <TrayItem $w={24}><Caret /></TrayItem>
            <TrayItem $w={24}><Wifi /></TrayItem>
            <TrayItem $w={24}><Volume /></TrayItem>
            <TrayItem $w={28}><PenIcon s={16} /></TrayItem>
            <TrayItem $w={38}>ESP</TrayItem>
            <Clock $w={68} $fs={12} $gap={5}><span>12:33 p. m.</span><span>03/05/2021</span></Clock>
            <TrayItem $w={44}><Notify><NoteBadge /></Notify></TrayItem>
            <DesktopLine />
          </Tray>
        </Taskbar>
      </LeftPane>

      <RightPane>
        <TabRow>
          <Tab>
            <Favicon />
            <TabTitle>Solución Node.js – “npm no reconocido como comando</TabTitle>
            <TabClose><X size={15} strokeWidth={3} /></TabClose>
          </Tab>
          <TabPlus><Plus size={20} strokeWidth={2} /></TabPlus>
          <ChromeControls>
            <ProfileDown><svg width="10" height="7" viewBox="0 0 10 7"><path d="M0 0h10L5 7z" fill="#000" /></svg></ProfileDown>
            <WinBtn $w={56}><Minus size={16} strokeWidth={1} color="#888" /></WinBtn>
            <WinBtn $w={56}><Restore c="#888" /></WinBtn>
            <WinBtn $w={56}><X size={17} strokeWidth={1} color="#888" /></WinBtn>
          </ChromeControls>
        </TabRow>
        <Toolbar>
          <ToolSlot $w={42}><ArrowLeft size={20} /></ToolSlot>
          <ToolSlot $w={44} $dim><ArrowRight size={20} /></ToolSlot>
          <ToolSlot $w={32}><RotateCw size={18} strokeWidth={2.2} /></ToolSlot>
          <ToolSlot $w={46}><Home size={19} strokeWidth={2.2} /></ToolSlot>
          <Omnibox>
            <Lock size={14} fill="#d8d8d8" />
            <UrlHost>bertofern.wordpress.com</UrlHost>
            <UrlPath>/2019/01/08/solucion-node-js-npm-no-reconocido-como-comando-interno-o-externo/</UrlPath>
            <ToolSlot $w={48}><Star size={19} strokeWidth={2} color="#c8c8c8" /></ToolSlot>
          </Omnibox>
          <ToolSlot $w={38}><HolaIcon /></ToolSlot>
          <ToolSlot $w={40}><DropboxIcon /></ToolSlot>
          <ToolSlot $w={32}><Puzzle /></ToolSlot>
          <ToolSlot $w={48}><MusicList /></ToolSlot>
          <ToolSlot $w={42}><Avatar /></ToolSlot>
          <ToolSlot $w={36}><MoreVertical size={20} strokeWidth={3} /></ToolSlot>
        </Toolbar>
        <Bookmarks>
          <Bookmark $w={131}><Apps />Aplicaciones</Bookmark>
          <Bookmark $w={40}><GoogleG /></Bookmark>
          <Bookmark $w={34}><Globe /></Bookmark>
          <Bookmark $w={46}><Yt /></Bookmark>
          <Bookmark $w={192}><Square c="#000" t="[as]" s={20} />Rest and Ricklaxatio...</Bookmark>
          <Bookmark $w={168}><XMark />XpertCAD | Home</Bookmark>
          <Bookmark $w={148}><Saes />SAES - ESCOM</Bookmark>
          <Bookmark $w={190}><Crunchy />Crunchyroll - Prueb...</Bookmark>
          <Bookmark $w={191}><Swirl />¡Naruto Shippuden!...</Bookmark>
          <Bookmark $w={187}><NBadge />Naruto: Shippuude...</Bookmark>
          <Bookmark $w={188}><Globe />REDES COMPUTAD...</Bookmark>
          <Bookmark $w={198}><Moodle />Sistemas Operativ...</Bookmark>
          <OverflowMark>»</OverflowMark>
          <BookmarkSep />
          <Bookmark $w={140}><ListBox />Lista de lectura</Bookmark>
        </Bookmarks>
        <Page>
          <Canvas>
            <Article>
              <Para>
                Habiendo instalado Node.js, salta un error al ejecutar el comando npm en el cms<br />
                (consola de windows). Aparece el siguiente <strong>error:</strong><br />
                “npm no reconoce como un comando interno o externo”.
              </Para>
              <Para>Primero hay que tener instalado el Node.js lo puedes descargar desde <TealLink>aquí.</TealLink></Para>
              <Para>Para solucionar este problema siga los siguientes pasos:</Para>
              <Steps>
                <Step>Ir a <strong>Este Equipo</strong> Propiedades.</Step>
                <Step>Haz clic en <strong>Configuración avanzada del sistema</strong> en la barra izquierda de la ventana.</Step>
                <Step>Ahora tienes la ventana Propiedades del sistema. Haga clic en la pestaña <strong>Opciones<br />Avanzadas.</strong></Step>
                <Step>A continuación, haz clic en el botón <strong>Variable de entorno</strong> ...</Step>
                <Step>Ahora tiene una ventana de variable de entorno: desde <strong>la variable de usuario,<br />seleccione “Path”</strong></Step>
                <Step>Haga clic en <strong>Editar</strong></Step>
                <Step>Ahora, en Valor de variable, <strong>agregue la ruta</strong> de <strong>acceso</strong> donde se instaló<br />Node.js. ( <em>C:\Archivos de programa\nodejs\</em>).</Step>
                <Step><strong>Aceptar y Aplicar en las siguientes ventanas.</strong></Step>
                <Step>El paso final es <strong>reiniciar</strong> su ordenador</Step>
              </Steps>
            </Article>
          </Canvas>
          <PageScroll>
            <PageArrow>▲</PageArrow>
            <PageThumb />
            <PageArrowEnd>▼</PageArrowEnd>
          </PageScroll>
          <Banner>
            <BannerText>Privacidad &amp; Cookies: este sitio usa cookies. Al continuar usando este sitio, estás de acuerdo con su uso. Para saber más, incluyendo como controlar las cookies, mira aquí: <BannerLink>Política de Cookies.</BannerLink></BannerText>
            <BannerButton>Cerrar y aceptar</BannerButton>
          </Banner>
          <Tick $x={709} />
          <Tick $x={1011} />
        </Page>
        <Taskbar $h={50}>
          <TaskSlot $w={60}><Win s={22} /></TaskSlot>
          <TaskSlot $w={62}><Loupe s={24} /></TaskSlot>
          <TaskSlot $w={60}><Ring s={22} /></TaskSlot>
          <TaskSlot $w={61}><TaskView s={24} /></TaskSlot>
          <TaskSlot $w={62} $tile $open={62}><ExplorerApp s={30} /></TaskSlot>
          {appsRow(30).map((a, i) => <TaskSlot key={i} $w={61.9} $open={openIdx.includes(i) ? 51 : 0}>{a}</TaskSlot>)}
          <Tray $pr={9}>
            <TrayItem $w={24}><PenIcon s={22} /></TrayItem>
            <Clock $w={90} $fs={17} $gap={7}><span>12:33 p. m.</span><span>03/05/2021</span></Clock>
          </Tray>
        </Taskbar>
      </RightPane>
    </Screen>
  );
}
